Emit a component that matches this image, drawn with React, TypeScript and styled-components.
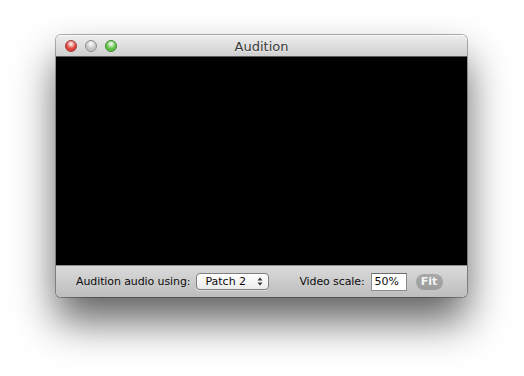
import styled, { createGlobalStyle } from "styled-components"

const GlobalStyle = createGlobalStyle`
  html, body {
    margin: 0;
    padding: 0;
    background: #ffffff;
  }
  body {
    font-family: "DejaVu Sans", "Liberation Sans", sans-serif;
  }
`

const Page = styled.div`
  width: 524px;
  height: 376px;
  padding: 35px 0 0 56px;
  box-sizing: border-box;
`

const Window = styled.div`
  width: 411px;
  height: 262px;
  display: flex;
  flex-direction: column;
  border-radius: 5px;
  overflow: hidden;
  box-shadow: 0 24px 42px rgba(0, 0, 0, 0.62), 0 0 0 1px rgba(0, 0, 0, 0.3);
`

const TitleBar = styled.div`
  height: 20px;
  flex: none;
  display: flex;
  align-items: center;
  position: relative;
  padding-left: 9px;
  gap: 8px;
  background: linear-gradient(#ececec, #d0d0d0);
  border-top: 1px solid #f8f8f8;
  border-bottom: 1px solid #5a5a5a;
`

const Light = styled.div<{ $c: string; $rim: string }>`
  width: 12px;
  height: 12px;
  border-radius: 50%;
  box-sizing: border-box;
  border: 1px solid ${p => p.$rim};
  background: radial-gradient(circle at 50% 30%, #ffffff 0, ${p => p.$c} 55%, ${p => p.$c} 100%);
`

const Title = styled.div`
  position: absolute;
  left: 0;
  right: 0;
  top: 0;
  bottom: 0;
  display: flex;
  align-items: center;
  justify-content: center;
  font-size: 13px;
  color: #3a3a3a;
  text-shadow: 0 1px 0 rgba(255, 255, 255, 0.6);
  pointer-events: none;
`

const Video = styled.div`
  flex: 1;
  background: #000000;
`

const BottomBar = styled.div`
  height: 31px;
  flex: none;
  display: flex;
  align-items: center;
  padding: 0 0 0 20px;
  background: linear-gradient(#dadada, #bdbdbd);
  border-top: 1px solid #8e8e8e;
  font-size: 11px;
  color: #0c0c0c;
`

const Label = styled.span<{ $ml?: number }>`
  margin-left: ${p => p.$ml ?? 0}px;
  white-space: nowrap;
  letter-spacing: -0.1px;
`

const Popup = styled.div`
  margin-left: 6px;
  width: 73px;
  height: 17px;
  box-sizing: border-box;
  display: flex;
  align-items: center;
  justify-content: space-between;
  padding: 0 5px 0 8px;
  border: 1px solid #7f7f7f;
  border-radius: 4px;
  background: linear-gradient(#ffffff, #ececec);
  box-shadow: 0 1px 0 rgba(255, 255, 255, 0.4);
`

const Field = styled.div`
  margin-left: 6px;
  width: 36px;
  height: 18px;
  box-sizing: border-box;
  padding: 0 3px;
  display: flex;
  align-items: center;
  background: #ffffff;
  border: 1px solid #8c8c8c;
  border-top-color: #6c6c6c;
`

const FitButton = styled.div`
  margin-left: 9px;
  width: 27px;
  height: 16px;
  border-radius: 8px;
  background: linear-gradient(#a8a8a8, #9c9c9c);
  color: #f4f4f4;
  font-weight: bold;
  font-size: 11px;
  display: flex;
  align-items: center;
  justify-content: center;
`

const Arrows = () => (
  <svg width="6" height="9" viewBox="0 0 6 9">
    <path d="M0.5 3.5 L3 0.5 L5.5 3.5 Z" fill="#333" />
    <path d="M0.5 5.5 L3 8.5 L5.5 5.5 Z" fill="#333" />
  </svg>
)

export default function App() {
  return (
    <Page>
      <GlobalStyle />
      <Window>
        <TitleBar>
          <Light $c="#e0443e" $rim="#a33a33" />
          <Light $c="#c6c6c6" $rim="#8e8e8e" />
          <Light $c="#5fc247" $rim="#3d8a2f" />
          <Title>Audition</Title>
        </TitleBar>
        <Video />
        <BottomBar>
          <Label>Audition audio using:</Label>
          <Popup>
            <span>Patch 2</span>
            <Arrows />
          </Popup>
          <Label $ml={30}>Video scale:</Label>
          <Field>50%</Field>
          <FitButton>Fit</FitButton>
        </BottomBar>
      </Window>
    </Page>
  )
}
